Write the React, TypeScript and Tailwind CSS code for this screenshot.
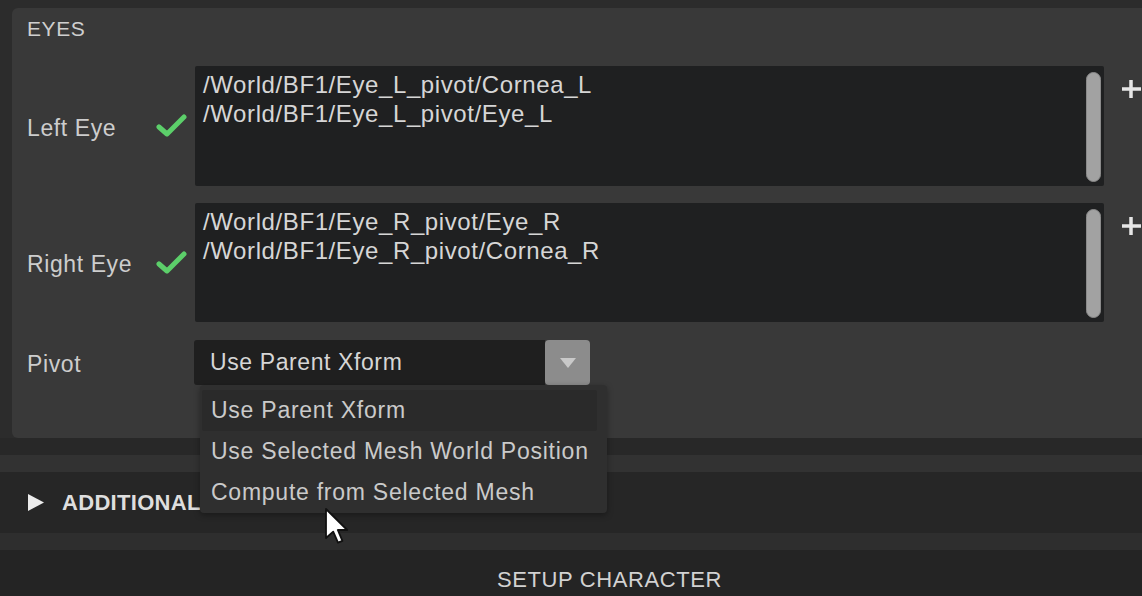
import React from "react";

const pathsLeft = ["/World/BF1/Eye_L_pivot/Cornea_L", "/World/BF1/Eye_L_pivot/Eye_L"];
const pathsRight = ["/World/BF1/Eye_R_pivot/Eye_R", "/World/BF1/Eye_R_pivot/Cornea_R"];
const pivotOptions = ["Use Parent Xform", "Use Selected Mesh World Position", "Compute from Selected Mesh"];

function Check() {
  return (
    <svg width="31" height="26" viewBox="0 0 31 26">
      <polyline
        points="3,14 11,21 28,4"
        fill="none"
        stroke="#5ccf6a"
        strokeWidth="5"
        strokeLinecap="round"
        strokeLinejoin="round"
      />
    </svg>
  );
}

function Plus() {
  return (
    <svg width="20" height="22" viewBox="0 0 20 22" className="self-start mt-[12px] shrink-0">
      <path d="M10 2v18M1 11h19" stroke="#e6e6e6" strokeWidth="3.5" />
    </svg>
  );
}

function PathList({ items, height }: { items: string[]; height: string }) {
  return (
    <div className={`relative w-[909px] ${height} bg-[#1f2021] rounded-[2px] pl-[8px] pt-[4px] text-[24px] text-[#d6d6d6] leading-[29px]`}>
      {items.map((p) => (
        <div key={p}>{p}</div>
      ))}
      <div className="absolute right-[3px] top-[6px] bottom-[4px] w-[15px] rounded-full bg-[#a2a2a2] border border-[#8a8a8a]" />
    </div>
  );
}

function Row({ label, children }: { label: string; children: React.ReactNode }) {
  return (
    <div className="flex items-center">
      <div className="w-[129px] pt-[4px] text-[#cdcdcd]">{label}</div>
      <div className="w-[31px] flex items-center">
        <Check />
      </div>
      <div className="w-[8px]" />
      {children}
    </div>
  );
}

export default function App() {
  return (
    <div className="relative w-[1142px] h-[596px] overflow-hidden bg-[#2c2c2c] font-['Liberation_Sans',sans-serif] text-[23px] tracking-[0.6px]">
      <div className="pt-[8px] pl-[12px]">
        <div className="bg-[#393939] rounded-l-[6px] w-[1140px] h-[430px] pl-[15px]">
          <div className="pt-[7px] h-[35px] text-[21px] leading-[28px] text-[#cfcfcf]">EYES</div>

          <div className="mt-[23px] flex flex-col gap-[17px]">
            <Row label="Left Eye">
              <PathList items={pathsLeft} height="h-[120px]" />
              <div className="w-[17px]" />
              <Plus />
            </Row>
            <Row label="Right Eye">
              <PathList items={pathsRight} height="h-[119px]" />
              <div className="w-[17px]" />
              <Plus />
            </Row>
          </div>

          <div className="mt-[18px] flex items-center">
            <div className="w-[167px] pt-[3px] text-[#cdcdcd]">Pivot</div>
            <div className="relative flex h-[45px]">
              <div className="w-[351px] h-full bg-[#1f1f1f] rounded-l-[3px] pl-[16px] flex items-center text-[#d6d6d6]">
                Use Parent Xform
              </div>
              <div className="w-[45px] h-full bg-[#8c8c8c] rounded-[4px] flex items-center justify-center">
                <svg width="16" height="10" viewBox="0 0 16 10">
                  <polygon points="0,0 16,0 8,10" fill="#c9c9c9" />
                </svg>
              </div>

              <div className="absolute z-10 left-[6px] top-[45px] w-[407px] h-[128px] bg-[#2f2f2f] rounded-[4px] pl-[2px] pr-[10px] pt-[5px] shadow-[0_2px_6px_rgba(0,0,0,0.35)] text-[#cacaca] tracking-[0.75px]">
                {pivotOptions.map((o, i) => (
                  <div
                    key={o}
                    className={`h-[41px] pl-[9px] flex items-center rounded-[2px] ${i === 0 ? "bg-[#2a2a2a]" : ""}`}
                  >
                    {o}
                  </div>
                ))}
              </div>
            </div>
          </div>
        </div>
      </div>

      <div className="h-[17px] bg-[#282828]" />
      <div className="h-[17px] bg-[#323232]" />
      <div className="h-[61px] bg-[#262626] flex items-center pl-[28px]">
        <svg width="16" height="17" viewBox="0 0 16 17">
          <polygon points="0,0 16,8.5 0,17" fill="#ececec" />
        </svg>
        <span className="ml-[18px] text-[22px] font-bold text-[#dedede] tracking-[0.3px]">ADDITIONAL</span>
      </div>
      <div className="h-[17px] bg-[#2e2e2e]" />
      <div className="h-[46px] bg-[#242424] flex justify-center pl-[77px] pt-[18px] text-[22px] leading-[24px] text-[#d2d2d2]">
        SETUP CHARACTER
      </div>

      <svg
        className="absolute left-[324px] top-[507px] z-20"
        width="26"
        height="38"
        viewBox="0 0 13 19"
      >
        <path
          d="M1 1 L1 15.5 L4.6 12.3 L7 17.8 L9.2 16.9 L6.9 11.5 L11.6 11.5 Z"
          fill="#ffffff"
          stroke="#111111"
          strokeWidth="0.9"
          strokeLinejoin="round"
        />
      </svg>
    </div>
  );
}
